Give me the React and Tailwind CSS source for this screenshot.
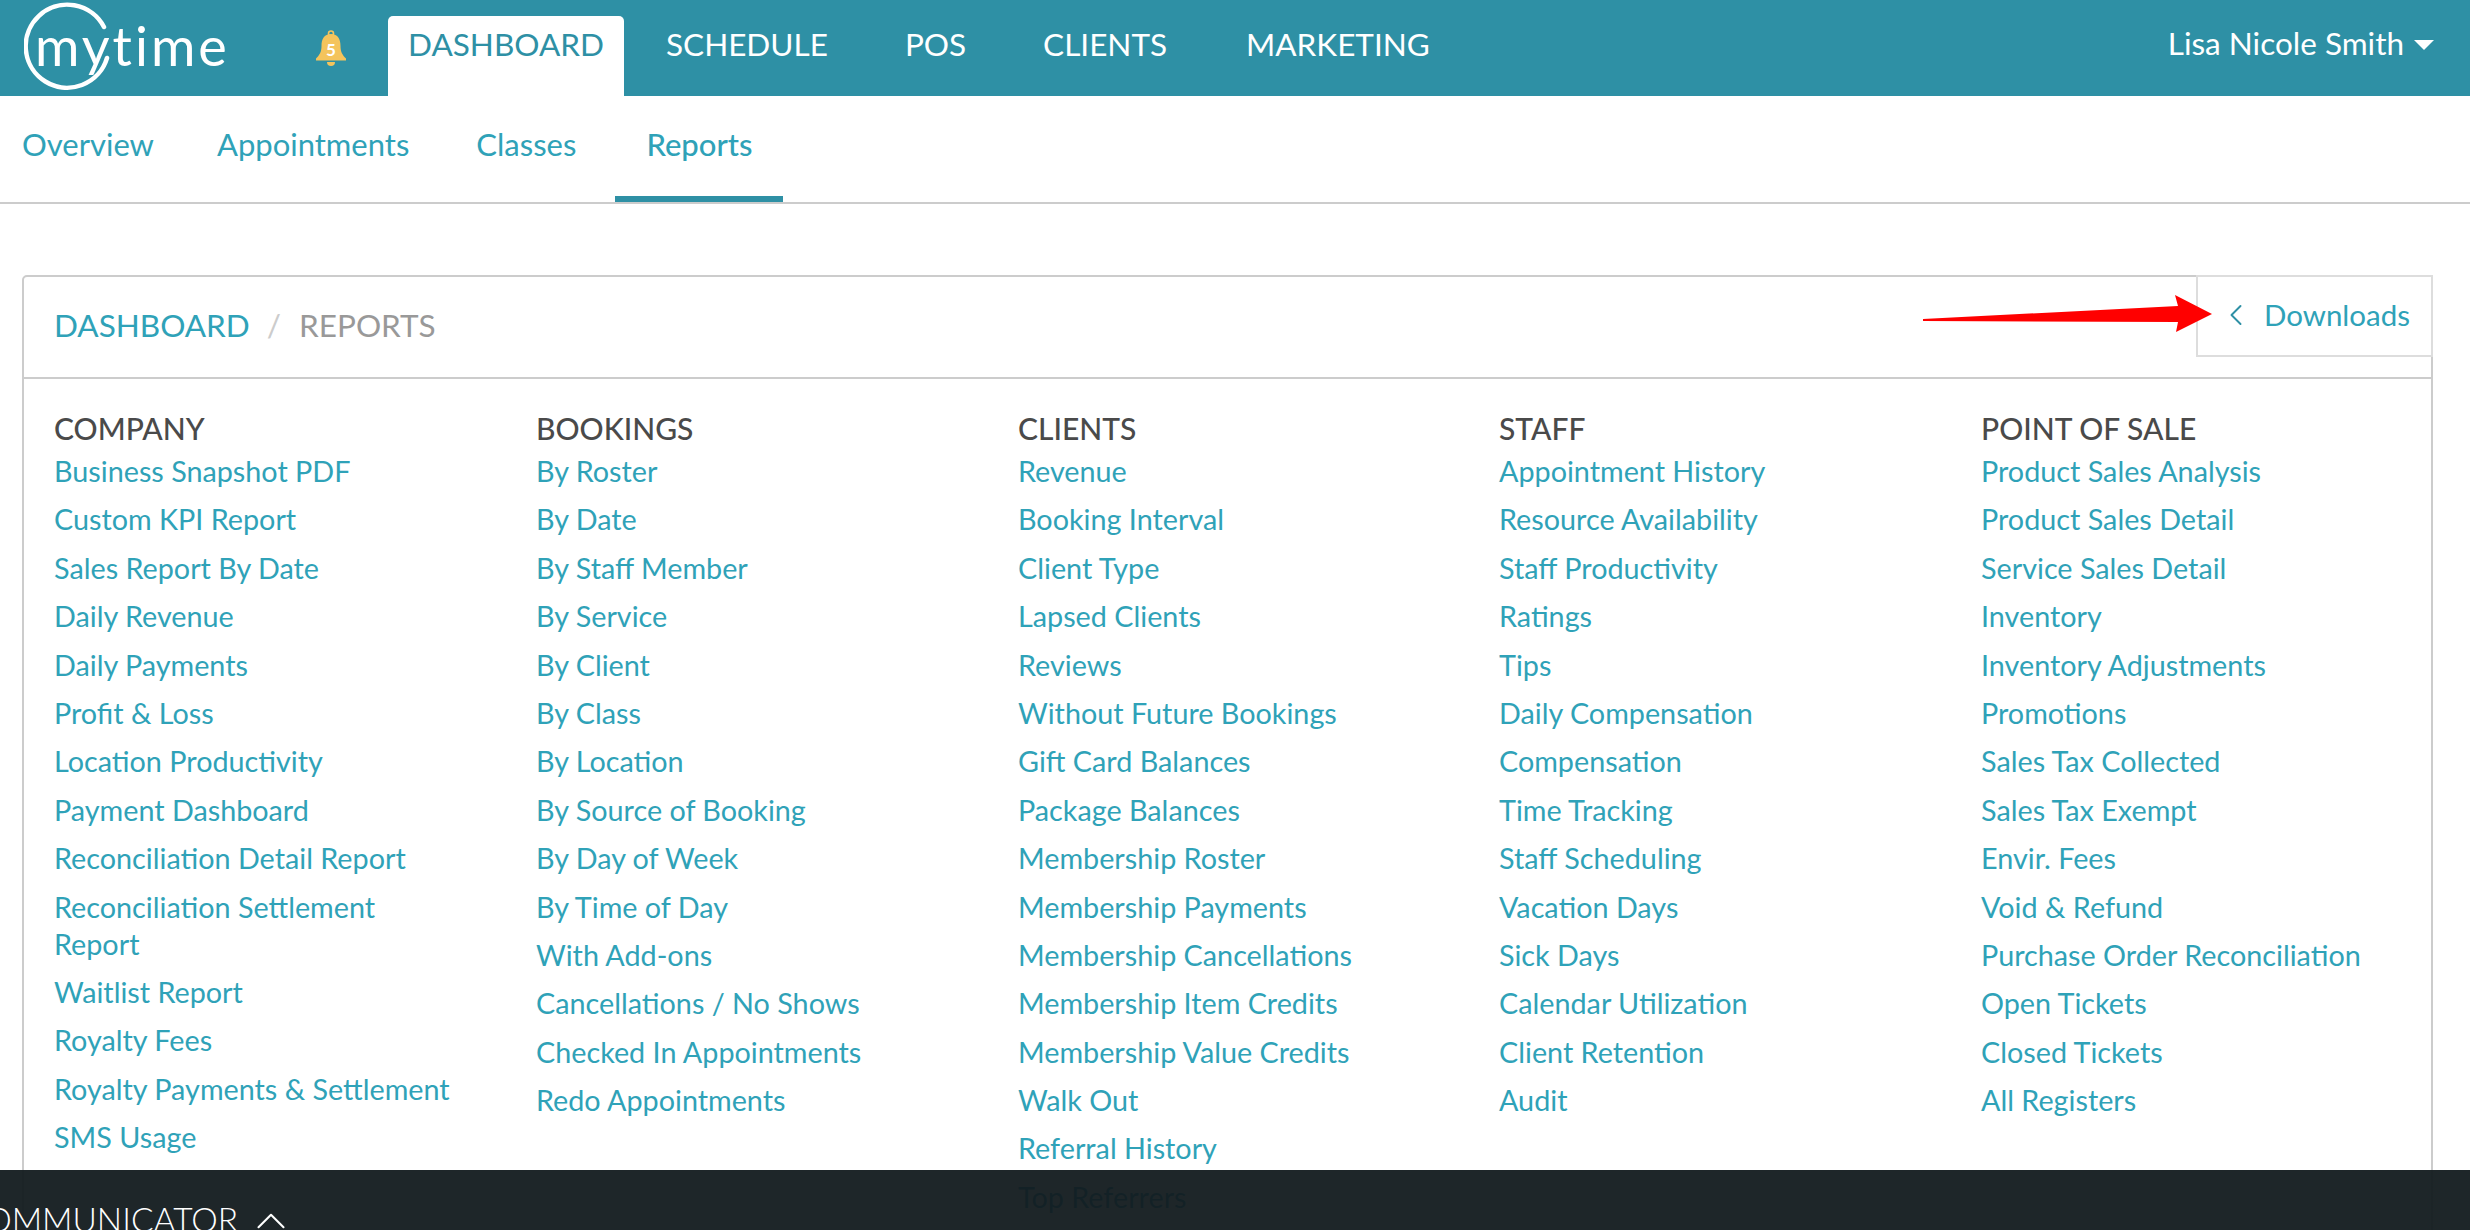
import React from 'react';
import { ChevronLeft, ChevronUp } from 'lucide-react';

const columns = [
  {
    title: 'COMPANY',
    links: [
      'Business Snapshot PDF', 'Custom KPI Report', 'Sales Report By Date', 'Daily Revenue', 'Daily Payments',
      'Profit & Loss', 'Location Productivity', 'Payment Dashboard', 'Reconciliation Detail Report',
      'Reconciliation Settlement Report', 'Waitlist Report', 'Royalty Fees', 'Royalty Payments & Settlement', 'SMS Usage',
    ],
  },
  {
    title: 'BOOKINGS',
    links: [
      'By Roster', 'By Date', 'By Staff Member', 'By Service', 'By Client', 'By Class', 'By Location',
      'By Source of Booking', 'By Day of Week', 'By Time of Day', 'With Add-ons', 'Cancellations / No Shows',
      'Checked In Appointments', 'Redo Appointments',
    ],
  },
  {
    title: 'CLIENTS',
    links: [
      'Revenue', 'Booking Interval', 'Client Type', 'Lapsed Clients', 'Reviews', 'Without Future Bookings',
      'Gift Card Balances', 'Package Balances', 'Membership Roster', 'Membership Payments', 'Membership Cancellations',
      'Membership Item Credits', 'Membership Value Credits', 'Walk Out', 'Referral History', 'Top Referrers',
    ],
  },
  {
    title: 'STAFF',
    links: [
      'Appointment History', 'Resource Availability', 'Staff Productivity', 'Ratings', 'Tips', 'Daily Compensation',
      'Compensation', 'Time Tracking', 'Staff Scheduling', 'Vacation Days', 'Sick Days', 'Calendar Utilization',
      'Client Retention', 'Audit',
    ],
  },
  {
    title: 'POINT OF SALE',
    links: [
      'Product Sales Analysis', 'Product Sales Detail', 'Service Sales Detail', 'Inventory', 'Inventory Adjustments',
      'Promotions', 'Sales Tax Collected', 'Sales Tax Exempt', 'Envir. Fees', 'Void & Refund',
      'Purchase Order Reconciliation', 'Open Tickets', 'Closed Tickets', 'All Registers',
    ],
  },
];

const Logo = () => (
  <div className="relative w-[210px] h-[96px] ml-[24px] shrink-0">
    <svg className="absolute left-0 top-0" width="100" height="96" viewBox="0 0 100 96" fill="none">
      <path d="M80 27 A41.500 41.500 0 1 0 83 58" stroke="white" strokeWidth="4.500" strokeLinecap="round" />
    </svg>
    <span className="absolute left-[11px] top-[19px] text-[54px] leading-[54px] font-normal text-white tracking-[3px]">
      mytime
    </span>
  </div>
);

const Bell = () => (
  <div className="relative w-[32px] h-[36px] ml-[81px] mr-[41px] shrink-0">
    <svg width="32" height="36" viewBox="0 0 32 36">
      <circle cx="16" cy="3.500" r="2.500" fill="none" stroke="#f4c45c" strokeWidth="1.600" />
      <path d="M16 4c7 0 9.500 5 9.500 12 0 6 2 9 5.500 12.500v2H1v-2C4.500 25 6.500 22 6.500 16 6.500 9 9 4 16 4z" fill="#f4c45c" />
      <path d="M12 32h8a4 4 0 0 1-8 0z" fill="#f4c45c" />
    </svg>
    <span className="absolute inset-x-0 top-[10px] text-center text-[17px] leading-[20px] font-bold text-white">5</span>
  </div>
);

const App = () => {
  return (
    <div className="relative h-screen overflow-hidden bg-white font-['Lato',sans-serif]">
      {/* top nav */}
      <header className="flex items-end h-[96px] bg-[#2e90a5] text-white text-[31.500px]">
        <Logo />
        <div className="self-center h-[96px] flex items-center">
          <Bell />
        </div>
        <a className="flex items-center justify-center w-[236px] h-[80px] bg-white text-[#2e90a5] rounded-t-[5px] pb-[22px]">DASHBOARD</a>
        <nav className="flex items-center h-[96px] gap-[77px] ml-[42px] pb-[6px]">
          <a>SCHEDULE</a>
          <a>POS</a>
          <a>CLIENTS</a>
          <a className="ml-[2px]">MARKETING</a>
        </nav>
        <div className="ml-auto mr-[36px] h-[96px] flex items-center gap-[10px] pb-[8px]">
          <span>Lisa Nicole Smith</span>
          <span className="w-0 h-0 border-x-[10px] border-x-transparent border-t-[10px] border-t-white mt-[2px]" />
        </div>
      </header>

      {/* sub nav */}
      <nav className="flex h-[108px] border-b-2 border-[#cccccc] text-[31px] text-[#2fa2b8]">
        <a className="flex items-center h-full ml-[22px] pb-[9px]">Overview</a>
        <a className="flex items-center h-full ml-[63px] pb-[9px]">Appointments</a>
        <a className="flex items-center h-full ml-[67px] pb-[9px]">Classes</a>
        <a className="flex items-center justify-center h-full w-[168px] ml-[39px] pb-[3px] border-b-[6px] border-[#2e90a5] font-medium">Reports</a>
      </nav>

      {/* reports card */}
      <main className="mt-[71px] mx-[22px] w-[2411px] border-2 border-[#cccccc] rounded-t-[5px]">
        <div className="relative flex items-center h-[102px] border-b-2 border-[#cccccc] pl-[30px] text-[31.500px] pb-[2px]">
          <a className="text-[#2fa2b8]">DASHBOARD</a>
          <span className="ml-[17px] text-[#cccccc]">/</span>
          <span className="ml-[18px] text-[#999999]">REPORTS</span>
          <a className="absolute -right-[2px] -top-[2px] flex items-center w-[237px] h-[82px] bg-white border-2 border-[#dddddd] pl-[20px] pb-[2px] text-[29.500px] text-[#2fa2b8]">
            <ChevronLeft size={36} strokeWidth={1.300} className="text-[#2e90a5]" />
            <span className="ml-[10px]">Downloads</span>
          </a>
        </div>
        <div className="grid grid-cols-[482px_482px_481px_482px_1fr] pl-[30px] pt-[29px] h-[900px]">
          {columns.map((col) => (
            <div key={col.title}>
              <h3 className="text-[30px] leading-[40px] font-medium text-[#4a4a4a] mb-[5px]">{col.title}</h3>
              <ul className={`${col.title === 'COMPANY' ? 'pr-[75px]' : 'pr-[20px]'} text-[28.750px] leading-[37px] text-[#2fa2b8]`}>
                {col.links.map((link) => (
                  <li key={link} className="pb-[11.400px]">{link}</li>
                ))}
              </ul>
            </div>
          ))}
        </div>
      </main>

      {/* annotation arrow */}
      <svg className="absolute left-[1915px] top-[290px]" width="305" height="48" viewBox="1915 290 305 48">
        <polygon points="1923,319 2178,306 2175,295 2212,314 2176,332 2178,322 1923,321" fill="#ff0000" />
      </svg>

      {/* communicator bar */}
      <div className="absolute inset-x-0 bottom-0 h-[60px] bg-[#121a1d]/95 text-white">
        <div className="absolute right-[2232px] top-[31px] text-[33.500px] leading-[36px] font-light whitespace-nowrap">
          COMMUNICATOR
        </div>
        <ChevronUp size={50} strokeWidth={1} className="absolute left-[246px] top-[26px]" />
      </div>
    </div>
  );
};

export default App;
